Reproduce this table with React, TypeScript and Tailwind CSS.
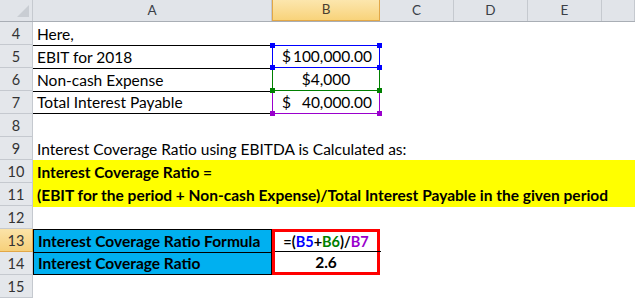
import React from "react";

const grid = "grid grid-cols-[33px_239px_108px_74px_74px_74px_33px]";
const font = "font-['Lato','Open_Sans',sans-serif]";

const colHeads = ["A", "B", "C", "D", "E", ""];

function RowHead({ n, active }: { n: number; active?: boolean }) {
  return (
    <div
      className={
        "flex h-[23px] items-center justify-center border-b border-r pt-px text-[14.5px] text-[#333] " +
        (active
          ? "border-[#e2a747] bg-gradient-to-b from-[#fbe3a8] to-[#f6d07a]"
          : "border-[#c5c9cf] bg-[#e4e7eb]")
      }
    >
      {n}
    </div>
  );
}

function Corner({ color, top, left }: { color: string; top: boolean; left: boolean }) {
  return (
    <span
      className={
        "absolute z-10 h-[5px] w-[5px] " +
        color +
        (top ? " top-[-3px]" : " bottom-[-3px]") +
        (left ? " left-[-3px]" : " right-[-3px]")
      }
    />
  );
}

function Row({ n, active, children }: { n: number; active?: boolean; children?: React.ReactNode }) {
  return (
    <div className={grid + " h-[23px]"}>
      <RowHead n={n} active={active} />
      {children}
    </div>
  );
}

export default function App() {
  return (
    <div className={"h-[298px] w-[635px] overflow-hidden bg-white text-[15.5px] leading-[24px] text-black " + font}>
      {/* column headers */}
      <div className={grid + " h-[22px] border-b border-[#a9aeb5] bg-[#e1e4e9]"}>
        <div className="relative border-r border-[#c5c9cf]">
          <svg className="absolute left-0 top-0" width="33" height="22">
            <polygon points="29,5 29,17 17,17" fill="#c9cdd3" />
          </svg>
        </div>
        {colHeads.map((c) => (
          <div
            key={c || "x"}
            className={
              "flex items-center justify-center text-[13.5px] leading-none " +
              (c === "B"
                ? "border-x border-b border-[#e2a747] bg-gradient-to-b from-[#fce6ad] to-[#f8d37a] text-[#4a4030]"
                : "border-r border-[#c5c9cf] text-[#3a3f47]")
            }
          >
            {c}
          </div>
        ))}
      </div>

      <Row n={4}>
        <div className="pl-[4px]">Here,</div>
      </Row>

      <Row n={5}>
        <div className="border-t border-black pl-[4px] leading-[22px]">EBIT for 2018</div>
        <div className="relative flex justify-between border border-[#0000ff] pl-[9px] pr-[7px] leading-[21px]">
          <span>$</span>
          <span>100,000.00</span>
          <Corner color="bg-[#0000ff]" top left />
          <Corner color="bg-[#0000ff]" top left={false} />
          <Corner color="bg-[#0000ff]" top={false} left />
          <Corner color="bg-[#0000ff]" top={false} left={false} />
        </div>
      </Row>

      <Row n={6}>
        <div className="border-t border-black pl-[4px] leading-[22px]">Non-cash Expense</div>
        <div className="relative border-x border-b border-[#008000] text-center leading-[22px]">
          $4,000
          <Corner color="bg-[#008000]" top={false} left />
          <Corner color="bg-[#008000]" top={false} left={false} />
        </div>
      </Row>

      <Row n={7}>
        <div className="border-y border-black pl-[4px] leading-[21px]">Total Interest Payable</div>
        <div className="relative flex justify-between border-x border-b border-[#9900cc] pl-[9px] pr-[7px] leading-[22px]">
          <span>$</span>
          <span>40,000.00</span>
          <Corner color="bg-[#9900cc]" top={false} left />
          <Corner color="bg-[#9900cc]" top={false} left={false} />
        </div>
      </Row>

      <Row n={8} />

      <Row n={9}>
        <div className="whitespace-nowrap pl-[4px]">Interest Coverage Ratio using EBITDA is Calculated as:</div>
      </Row>

      <Row n={10}>
        <div className="col-span-6 whitespace-nowrap bg-[#ffff00] pl-[4px] font-bold">Interest Coverage Ratio =</div>
      </Row>

      <Row n={11}>
        <div className="col-span-6 whitespace-nowrap bg-[#ffff00] pl-[4px] font-bold">
          (EBIT for the period + Non-cash Expense)/Total Interest Payable in the given period
        </div>
      </Row>

      <Row n={12} />

      <Row n={13} active>
        <div className="border-x border-t border-black bg-[#00b0f0] pl-[4px] font-bold leading-[22px]">
          Interest Coverage Ratio Formula
        </div>
        <div className="relative border-x-[3px] border-t-[3px] border-[#ff0000] text-center text-[14.5px] font-bold leading-[20px]">
          <span className="absolute bottom-0 left-0 right-[-4px] h-px bg-black" />
          =(<span className="text-[#0000ff]">B5</span>+<span className="text-[#008000]">B6</span>)/
          <span className="text-[#9900cc]">B7</span>
        </div>
      </Row>

      <Row n={14}>
        <div className="border border-black bg-[#00b0f0] pl-[4px] font-bold leading-[21px]">Interest Coverage Ratio</div>
        <div className="border-x-[3px] border-b-[3px] border-[#ff0000] text-center font-bold leading-[20px]">2.6</div>
      </Row>

      <Row n={15} />
    </div>
  );
}
